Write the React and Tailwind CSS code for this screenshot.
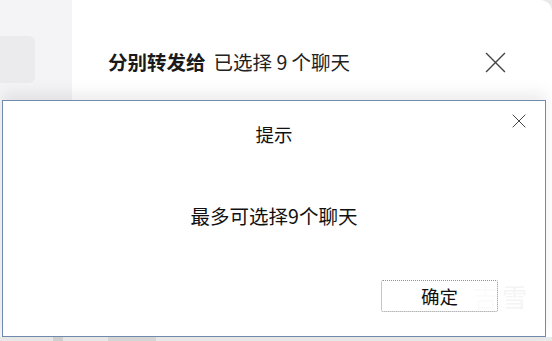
import React from 'react';

const font = { fontFamily: '"Noto Sans CJK SC", "Noto Sans", sans-serif' };

const CloseIcon = ({ size, stroke = 1.4, className }) => (
  <svg width={size} height={size} viewBox="0 0 20 20" className={className}>
    <path d="M1 1 L19 19 M19 1 L1 19" stroke="currentColor" strokeWidth={stroke} fill="none" />
  </svg>
);

export default function App() {
  return (
    <div
      className="relative w-[552px] h-[341px] overflow-hidden bg-[#e9e9eb] text-[#1a1a1a]"
      style={font}
    >
      {/* Background window */}
      <div className="flex flex-col h-full">
        <div className="flex h-[337px]">
          <div className="w-[72px] bg-[#f4f4f6] pt-[36px]">
            <div className="w-[35px] h-[47px] bg-[#ebebed] rounded-r-[6px]" />
          </div>
          <div className="flex-1 bg-white rounded-tr-[12px]">
            <div className="flex items-center justify-between pl-[36px] pr-[46px] pt-[48px]">
              <div className="flex items-baseline text-[19.5px] leading-[28px]">
                <span className="font-bold">分别转发给</span>
                <span className="ml-[8px] text-[#222]">已选择 9 个聊天</span>
              </div>
              <CloseIcon size={21} stroke={1.3} className="text-[#444]" />
            </div>
          </div>
        </div>
        <div className="flex h-[4px] bg-[#e8e8e8]">
          <div className="ml-[53px] w-[10px] bg-[#cfcfcf]" />
          <div className="ml-[45px] w-[48px] bg-[#d6d6d6]" />
        </div>
      </div>

      {/* Alert dialog */}
      <div className="absolute left-[2px] top-[100px] w-[544px] h-[237px] bg-white border border-[#6f8aad] shadow-[0_-8px_14px_rgba(0,0,0,0.07)] flex flex-col">
        <div className="absolute right-[19px] top-[13px]">
          <CloseIcon size={14} stroke={1.3} className="text-[#333]" />
        </div>
        <div className="pt-[20px] text-center text-[18.5px] leading-[26px] text-[#111]">提示</div>
        <div className="mt-[55px] text-center text-[19.5px] leading-[28px] text-[#111]">最多可选择9个聊天</div>
        <div className="mt-auto mb-[24px] flex justify-end pr-[47px] relative">
          <span className="absolute right-[14px] top-[3px] text-[25px] leading-[26px] tracking-[4px] text-[#f4f4f4] select-none">吉雪</span>
          <button className="relative w-[117px] h-[32px] rounded-[2px] border border-dotted border-[#8f8f8f] bg-white/60 text-[18.5px] leading-[24px] text-[#111]">
            确定
          </button>
        </div>
      </div>
    </div>
  );
}
